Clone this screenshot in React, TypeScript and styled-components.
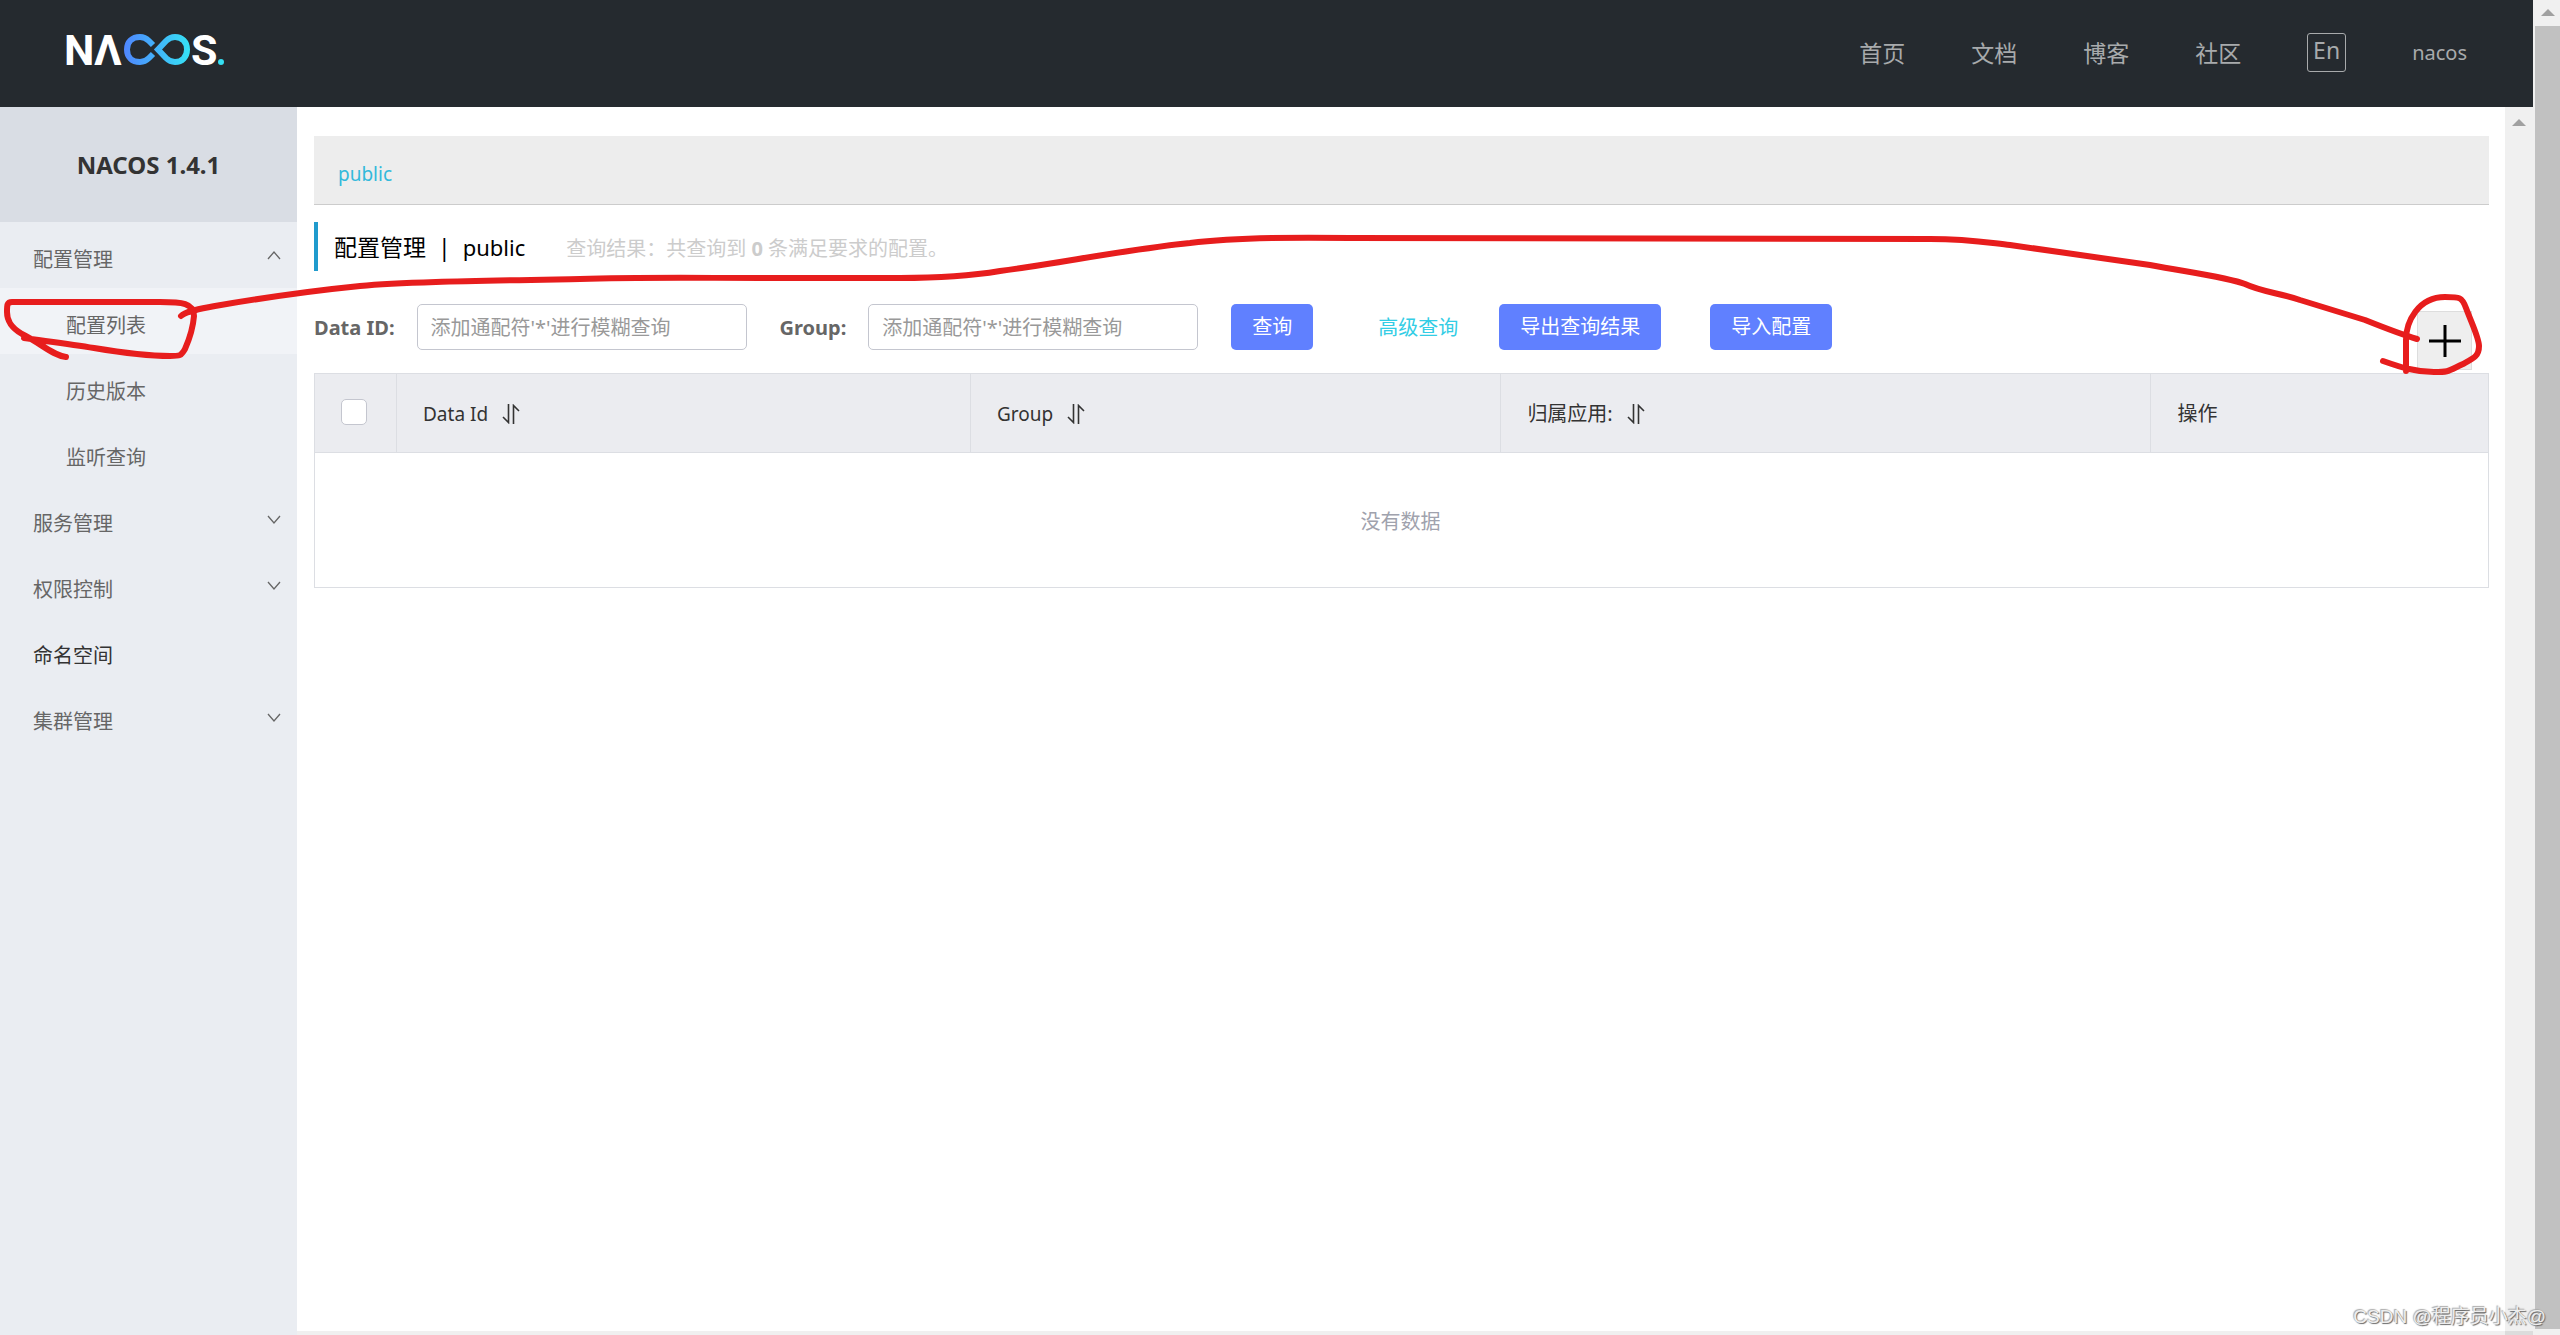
import React from "react";
import styled, { createGlobalStyle } from "styled-components";

const GlobalStyle = createGlobalStyle`
  * { box-sizing: border-box; }
  body {
    margin: 0;
    background: #fff;
    color: #333;
    font-family: "Noto Sans", "Noto Sans CJK SC", sans-serif;
    font-size: 20px;
    line-height: 30px;
  }
  button, input { font: inherit; }
  a { text-decoration: none; color: inherit; }
`;

const Screen = styled.div`
  position: relative;
  display: flex;
  height: 100vh;
  overflow: hidden;
`;

const Site = styled.div`
  flex: 1;
  min-width: 0;
  display: flex;
  flex-direction: column;
`;

const Header = styled.header`
  flex: none;
  display: flex;
  align-items: center;
  justify-content: space-between;
  height: 107px;
  padding: 0 66px 0 64px;
  background: #252a2f;
  color: #a8aaac;
`;

const LogoLink = styled.a`
  display: flex;
  padding-bottom: 8px;
`;

const Nav = styled.nav`
  display: flex;
  align-items: center;
  gap: 66px;
  padding-bottom: 2px;
`;

const NavLink = styled.a<{ $small?: boolean }>`
  font-size: ${(p) => (p.$small ? "20px" : "23px")};
`;

const LangButton = styled.button`
  width: 39px;
  height: 39px;
  padding: 0 0 5px;
  border: 1px solid #a8aaac;
  border-radius: 3px;
  background: none;
  color: inherit;
  font-size: 23px;
  line-height: 30px;
`;

const Body = styled.div`
  flex: 1;
  min-height: 0;
  display: flex;
`;

const Sidebar = styled.aside`
  flex: none;
  width: 297px;
  background: #eaedf2;
`;

const Version = styled.h1`
  margin: 0;
  height: 115px;
  background: #d9dde4;
  font-size: 24px;
  line-height: 115px;
  text-align: center;
`;

const MenuList = styled.ul`
  margin: 0;
  padding: 0;
  list-style: none;
`;

const MenuLink = styled.a<{ $sub?: boolean; $active?: boolean; $dark?: boolean }>`
  display: flex;
  align-items: center;
  justify-content: space-between;
  height: 66px;
  padding: 10px 16px 0 ${(p) => (p.$sub ? "66px" : "33px")};
  background: ${(p) => (p.$active ? "#f1f3f7" : "transparent")};
  color: ${(p) => (p.$dark ? "#333" : "#666")};

  svg { margin-bottom: 10px; }
`;

const Column = styled.div`
  flex: 1;
  min-width: 0;
  display: flex;
  flex-direction: column;
`;

const Content = styled.main`
  flex: 1;
  min-height: 0;
  padding: 29px 16px 0 17px;
`;

const BottomTrack = styled.div`
  flex: none;
  height: 4px;
  background: #f0f0f0;
`;

const NamespaceBar = styled.div`
  display: flex;
  align-items: center;
  height: 69px;
  padding: 7px 24px 0;
  border-bottom: 1px solid #ccc;
  background: #ededed;
  color: #33b9db;
  font-size: 19px;
`;

const TitleRow = styled.div`
  display: flex;
  align-items: center;
  height: 49px;
  margin: 17px 0 33px;
  padding-left: 16px;
  border-left: 4px solid #209bcd;
`;

const Title = styled.h2`
  display: flex;
  gap: 12px;
  margin: 0;
  color: #000;
  font-size: 23px;
  font-weight: 400;
`;

const TitleNamespace = styled.span`
  font-size: 22px;
`;

const ResultNote = styled.p`
  margin: 0 0 0 41px;
  padding-top: 4px;
  color: #ccc;
`;

const Toolbar = styled.form`
  display: flex;
  align-items: center;
  height: 46px;
`;

const FieldLabel = styled.label`
  margin-right: 22px;
  padding-top: 2px;
  color: #666;
  font-weight: 700;
`;

const TextField = styled.input`
  width: 330px;
  height: 46px;
  margin-right: 33px;
  padding: 0 13px;
  border: 1px solid #c4c6cf;
  border-radius: 5px;
  outline: none;
  background: #fff;

  &::placeholder { color: #999; opacity: 1; }
`;

const PrimaryButton = styled.button`
  height: 46px;
  padding: 0 21px;
  border: 0;
  border-radius: 5px;
  background: #6080ff;
  color: #fff;
`;

const AdvancedLink = styled.a`
  margin: 0 41px 0 65px;
  padding-top: 2px;
  color: #33cde5;
`;

const ImportSlot = styled.div`
  margin-left: 49px;
`;

const AddButton = styled.button`
  align-self: flex-start;
  flex: none;
  display: grid;
  place-items: center;
  width: 55px;
  height: 59px;
  margin: 7px 17px 0 auto;
  padding: 0;
  border: 1px solid #ddd;
  background: #eee;
`;

const ConfigTable = styled.table`
  width: 100%;
  margin-top: 23px;
  table-layout: fixed;
  border-collapse: collapse;
  border: 1px solid #dcdee3;
`;

const HeadCell = styled.th<{ $width?: string }>`
  width: ${(p) => p.$width ?? "auto"};
  height: 79px;
  padding: 0 26px;
  border: 1px solid #dcdee3;
  background: #ebecf0;
  color: #333;
  font-weight: 400;
  text-align: left;
`;

const HeadContent = styled.span<{ $latin?: boolean }>`
  display: flex;
  align-items: center;
  gap: 14px;
  padding-top: 2px;
  font-size: ${(p) => (p.$latin ? "19px" : "20px")};
`;

const Check = styled.input`
  appearance: none;
  display: block;
  width: 26px;
  height: 26px;
  margin: 0 0 3px;
  border: 1px solid #c4c6cf;
  border-radius: 5px;
  background: #fff;
`;

const EmptyCell = styled.td`
  height: 135px;
  padding: 4px 2px 0 0;
  color: #a0a2ad;
  text-align: center;
`;

const ScrollTrack = styled.div<{ $outer?: boolean }>`
  flex: none;
  display: flex;
  flex-direction: column;
  align-items: center;
  width: ${(p) => (p.$outer ? "27px" : "28px")};
  padding: ${(p) => (p.$outer ? "9px 0 6px 2px" : "12px 0 0")};
  background: #f0f0f0;
`;

const ScrollThumb = styled.div`
  flex: 1;
  width: 100%;
  margin-top: 10px;
  background: #c1c1c1;
`;

const TrackCorner = styled.div`
  width: 100%;
  height: 4px;
  margin-top: auto;
  background: #dcdcdc;
`;

const Markup = styled.svg`
  position: absolute;
  top: 0;
  left: 0;
  width: 100%;
  pointer-events: none;
`;

const Watermark = styled.span`
  position: absolute;
  right: 14px;
  bottom: 3px;
  color: #eee;
  font-family: "Liberation Sans", "Noto Sans CJK SC", sans-serif;
  font-size: 19px;
  line-height: 30px;
  text-shadow: 1px 1px 1px #666, -1px -1px 1px #aaa;
`;

const Logo = () => (
  <svg width="162" height="59" viewBox="64 20 162 59" role="img" aria-label="NACOS.">
    <defs>
      <linearGradient id="loop" gradientUnits="userSpaceOnUse" x1="124" y1="0" x2="190" y2="0">
        <stop offset="0" stopColor="#4f86ff" />
        <stop offset="1" stopColor="#35e2f5" />
      </linearGradient>
    </defs>
    <g fill="#fff" fontFamily="Roboto, sans-serif" fontWeight="700" fontSize="43">
      <text x="64" y="65">N</text>
      <text x="94" y="65">Λ</text>
      <text x="191" y="65">S</text>
    </g>
    <g fill="none" stroke="url(#loop)" strokeWidth="6">
      <path d="M153 45 L149 41 C146 38 143 37 140 37 C132 37 127 42 127 49.500 C127 57 132 62 140 62 C143 62 146 61 149 58 L153 54" />
      <path d="M158 49.500 L166 41 C169 38 171 37 175 37 C182 37 187 42 187 49.500 C187 57 182 62 175 62 C171 62 169 61 166 58 Z" />
    </g>
    <circle cx="221" cy="62" r="3" fill="#35dff2" />
  </svg>
);

const Chevron = ({ up }: { up?: boolean }) => (
  <svg width="14" height="9" viewBox="0 0 14 9" fill="none" stroke="#666" strokeWidth="1.300">
    <path d={up ? "M1 8 L7 1 L13 8" : "M1 1 L7 8 L13 1"} />
  </svg>
);

const SortIcon = () => (
  <svg width="18" height="20" viewBox="0 0 18 20" fill="none" stroke="#333" strokeWidth="1.600">
    <path d="M6.500 0 V18.500 L1 13" />
    <path d="M11.500 20 V1.500 L17 7" />
  </svg>
);

const ArrowUp = () => (
  <svg width="14" height="7" viewBox="0 0 14 7" fill="#a0a0a0">
    <path d="M7 0 L14 7 H0 Z" />
  </svg>
);

const navItems = ["首页", "文档", "博客", "社区"];

type MenuItem = { label: string; sub?: boolean; active?: boolean; dark?: boolean; arrow?: "up" | "down" };

const menuItems: MenuItem[] = [
  { label: "配置管理", arrow: "up" },
  { label: "配置列表", sub: true, active: true },
  { label: "历史版本", sub: true },
  { label: "监听查询", sub: true },
  { label: "服务管理", arrow: "down" },
  { label: "权限控制", arrow: "down" },
  { label: "命名空间", dark: true },
  { label: "集群管理", arrow: "down" },
];

const columns = [
  { label: "Data Id", width: "26.4%", sortable: true, latin: true },
  { label: "Group", width: "24.4%", sortable: true, latin: true },
  { label: "归属应用:", width: "29.9%", sortable: true },
  { label: "操作" },
];

export default function App() {
  return (
    <Screen>
      <GlobalStyle />
      <Site>
        <Header>
          <LogoLink href="#"><Logo /></LogoLink>
          <Nav>
            {navItems.map((item) => (
              <NavLink href="#" key={item}>{item}</NavLink>
            ))}
            <LangButton type="button">En</LangButton>
            <NavLink href="#" $small>nacos</NavLink>
          </Nav>
        </Header>
        <Body>
          <Sidebar>
            <Version>NACOS 1.4.1</Version>
            <MenuList>
              {menuItems.map((item) => (
                <li key={item.label}>
                  <MenuLink href="#" $sub={item.sub} $active={item.active} $dark={item.dark}>
                    {item.label}
                    {item.arrow && <Chevron up={item.arrow === "up"} />}
                  </MenuLink>
                </li>
              ))}
            </MenuList>
          </Sidebar>
          <Column>
            <Content>
              <NamespaceBar><a href="#">public</a></NamespaceBar>
              <TitleRow>
                <Title>
                  <span>配置管理</span>
                  <span>|</span>
                  <TitleNamespace>public</TitleNamespace>
                </Title>
                <ResultNote>
                  查询结果：共查询到 <strong>0</strong> 条满足要求的配置。
                </ResultNote>
              </TitleRow>
              <Toolbar>
                <FieldLabel htmlFor="data-id">Data ID:</FieldLabel>
                <TextField id="data-id" placeholder="添加通配符'*'进行模糊查询" />
                <FieldLabel htmlFor="group">Group:</FieldLabel>
                <TextField id="group" placeholder="添加通配符'*'进行模糊查询" />
                <PrimaryButton type="button">查询</PrimaryButton>
                <AdvancedLink href="#">高级查询</AdvancedLink>
                <PrimaryButton type="button">导出查询结果</PrimaryButton>
                <ImportSlot>
                  <PrimaryButton type="button">导入配置</PrimaryButton>
                </ImportSlot>
                <AddButton type="button" aria-label="新建配置">
                  <svg width="34" height="34" viewBox="0 0 34 34" stroke="#000" strokeWidth="3">
                    <path d="M17 1 V33 M1 17 H33" />
                  </svg>
                </AddButton>
              </Toolbar>
              <ConfigTable>
                <thead>
                  <tr>
                    <HeadCell $width="82px"><Check type="checkbox" aria-label="全选" /></HeadCell>
                    {columns.map((col) => (
                      <HeadCell key={col.label} $width={col.width}>
                        <HeadContent $latin={col.latin}>
                          {col.label}
                          {col.sortable && <SortIcon />}
                        </HeadContent>
                      </HeadCell>
                    ))}
                  </tr>
                </thead>
                <tbody>
                  <tr><EmptyCell colSpan={5}>没有数据</EmptyCell></tr>
                </tbody>
              </ConfigTable>
            </Content>
            <BottomTrack />
          </Column>
          <ScrollTrack>
            <ArrowUp />
            <TrackCorner />
          </ScrollTrack>
        </Body>
      </Site>
      <ScrollTrack $outer>
        <ArrowUp />
        <ScrollThumb />
      </ScrollTrack>
      <Markup viewBox="0 0 2560 1335" fill="none" stroke="#e71d1d" strokeWidth="6" strokeLinecap="round" strokeLinejoin="round" aria-hidden="true">
        <path d="M66 357 C52 355 42 344 22 334 C10 327 7 320 7 312 C7 305 7 302 12 302 H160 C182 302 194 303 194 316 C193 328 189 340 185 349 C181 356 180 356 170 356 C150 356 118 352 94 348 C70 344 45 341 24 338" />
        <path d="M181 316 C186 311 200 309 215 306 C250 300 300 292 360 286 C400 282 470 281 580 279 C640 277 700 278 760 278 H900 C940 278 970 276 1000 271 C1060 263 1130 249 1190 243 C1230 238 1290 237 1350 238 C1400 239 1600 239 1930 239 C1970 239 1990 243 2010 245 L2150 265 C2200 274 2230 278 2245 284 C2262 292 2280 293 2300 300 L2365 320 C2385 328 2400 334 2417 339" />
        <path d="M2406 371 V340 C2406 322 2418 297 2445 297 C2460 297 2462 297 2466 308 C2472 324 2479 338 2479 346 C2479 356 2474 358 2463 364 C2448 371 2450 372 2434 372 C2415 372 2400 367 2383 361" />
      </Markup>
      <Watermark>CSDN @程序员小杰@</Watermark>
    </Screen>
  );
}
